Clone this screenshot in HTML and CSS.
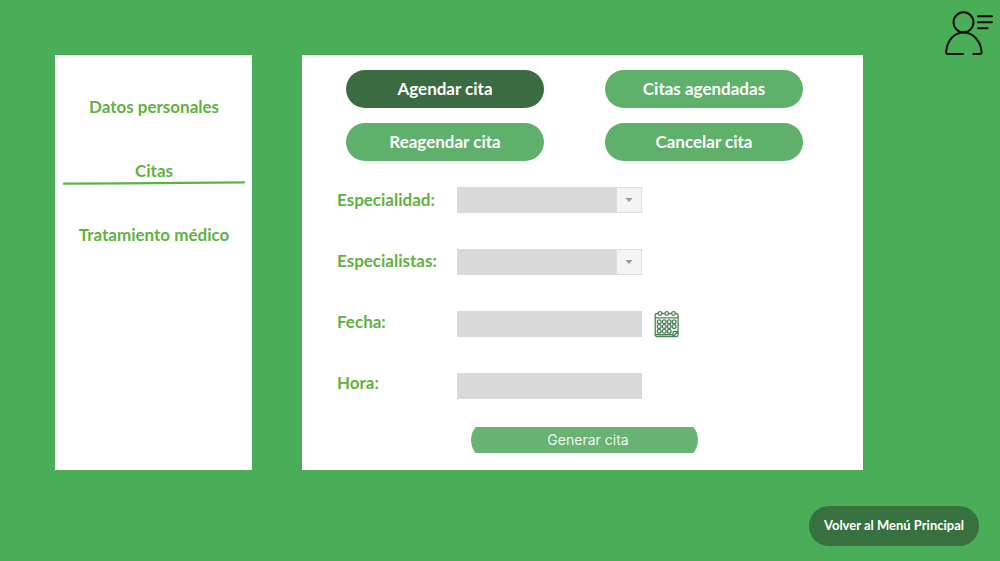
FILE: index.html
```html
<!DOCTYPE html>
<html lang="es">
<head>
<meta charset="utf-8">
<meta name="viewport" content="width=device-width, initial-scale=1">
<title>Agendar cita</title>
<link rel="stylesheet" href="styles.css">
</head>
<body>
<div class="page">
  <nav class="sidebar" aria-label="Secciones">
    <a class="nav-link" href="#datos">Datos personales</a>
    <a class="nav-link nav-link-active" href="#citas" aria-current="page">Citas
      <svg class="nav-underline" viewBox="0 0 182 4" preserveAspectRatio="none" aria-hidden="true"><path d="M1 2.700 L60 2.400 L120 1.800 L181 1.400" fill="none" stroke="#5fb143" stroke-width="2.300" stroke-linecap="round"/></svg>
    </a>
    <a class="nav-link" href="#tratamiento">Tratamiento médico</a>
  </nav>

  <main class="panel">
    <div class="actions">
      <button type="button" class="pill pill-active">Agendar cita</button>
      <button type="button" class="pill">Citas agendadas</button>
      <button type="button" class="pill">Reagendar cita</button>
      <button type="button" class="pill">Cancelar cita</button>
    </div>
    <form class="form">
      <div class="form-body">
        <div class="labels">
          <label for="especialidad">Especialidad:</label>
          <label for="especialistas">Especialistas:</label>
          <label for="fecha">Fecha:</label>
          <label for="hora">Hora:</label>
        </div>
        <div class="fields">
          <div class="select">
            <select class="field" id="especialidad"><option></option></select>
            <span class="select-arrow"><svg width="8" height="4" viewBox="0 0 8 4" aria-hidden="true"><path d="M0.500 0H7.500L4 4Z" fill="#999"/></svg></span>
          </div>
          <div class="select">
            <select class="field" id="especialistas"><option></option></select>
            <span class="select-arrow"><svg width="8" height="4" viewBox="0 0 8 4" aria-hidden="true"><path d="M0.500 0H7.500L4 4Z" fill="#999"/></svg></span>
          </div>
          <div class="date">
            <input class="field" id="fecha" type="text">
            <button type="button" class="calendar" aria-label="Abrir calendario">
              <svg width="26" height="28" viewBox="0 0 26 28" fill="none" stroke="#4b8257" stroke-width="1.3" aria-hidden="true">
                <path d="M4 3.500H3A1.800 1.800 0 0 0 1.200 5.300V24.700A1.800 1.800 0 0 0 3 26.500H22.300A1.800 1.800 0 0 0 24.100 24.700V5.300A1.800 1.800 0 0 0 22.300 3.500H21.500M8 3.500H11M15 3.500H18M1.200 7.800H24.100M1.200 24.600H19.500M19 26.300V22.800A1.300 1.300 0 0 1 20.300 21.500H24M19.500 26L24 21.500"/>
                <circle cx="6" cy="3.500" r="1.800"/><circle cx="12.700" cy="3.500" r="1.800"/><circle cx="19.500" cy="3.500" r="1.800"/>
                <circle cx="5.200" cy="11.800" r="1.900"/><circle cx="10.200" cy="11.800" r="1.900"/><circle cx="15.200" cy="11.800" r="1.900"/><circle cx="20.200" cy="11.800" r="1.900"/>
                <circle cx="5.200" cy="16.500" r="1.900"/><circle cx="10.200" cy="16.500" r="1.900"/><circle cx="15.200" cy="16.500" r="1.900"/><circle cx="20.200" cy="16.500" r="1.900"/>
                <circle cx="5.200" cy="21.200" r="1.900"/><circle cx="10.200" cy="21.200" r="1.900"/><circle cx="15.200" cy="21.200" r="1.900"/>
              </svg>
            </button>
          </div>
          <input class="field" id="hora" type="text">
        </div>
      </div>
      <button type="button" class="submit">Generar cita</button>
    </form>
  </main>

  <div class="profile">
    <button type="button" class="profile-button" aria-label="Perfil">
      <svg width="50" height="46" viewBox="0 0 50 46" fill="none" stroke="#0b0f0c" stroke-width="2" stroke-linecap="round" stroke-linejoin="round" aria-hidden="true">
        <circle cx="18.500" cy="12.300" r="10"/>
        <path d="M18 44H3C1.500 44 1 43.200 1.200 41.600C2 31 9 22.400 18.500 22.400S35.500 31 36.600 41.600C36.800 43.200 36 44 34.500 44H28.500M33 6.200H47M33 12.200H47M33 18.300H42.500"/>
      </svg>
    </button>
  </div>

  <footer class="footer">
    <button type="button" class="back">Volver al Menú Principal</button>
  </footer>
</div>
</body>
</html>
```
FILE: styles.css
```css
* {
  box-sizing: border-box;
}

body {
  margin: 0;
  background: #4aad58;
  font-family: Lato, "Liberation Sans", sans-serif;
  font-size: 17px;
  font-weight: 700;
}

button {
  border: 0;
  padding: 0;
  font: inherit;
  cursor: pointer;
}

.page {
  display: grid;
  grid-template-columns: 197fr 50px 561fr 137px;
  grid-template-rows: auto auto;
  padding-left: 55px;
}

.sidebar {
  display: flex;
  flex-direction: column;
  align-items: stretch;
  gap: 40px;
  margin-top: 55px;
  padding: 40px 7px 40px 8px;
  background: #fff;
}

.nav-link {
  position: relative;
  color: #5fb143;
  line-height: 24px;
  text-align: center;
  text-decoration: none;
  white-space: nowrap;
}

.nav-underline {
  position: absolute;
  left: 0;
  bottom: -2px;
  width: 100%;
  height: 4px;
}

.panel {
  grid-column: 3;
  margin-top: 55px;
  padding: 15px 60px 10px 35px;
  background: #fff;
}

.actions {
  display: grid;
  grid-template-columns: 1fr 1fr;
  gap: 15px 61px;
  padding-left: 9px;
}

.pill {
  height: 38px;
  padding-bottom: 2px;
  border-radius: 20px;
  background: #5fb06b;
  color: #fff;
}

.pill-active {
  background: #3b6b40;
}

.form {
  margin-top: 26px;
}

.form-body {
  display: flex;
  align-items: flex-start;
}

.labels {
  display: flex;
  flex-direction: column;
  gap: 37px;
  width: 120px;
  padding-top: 1px;
  color: #5fb143;
  line-height: 24px;
}

.fields {
  display: flex;
  flex-direction: column;
  align-items: flex-start;
  gap: 36px;
}

.field {
  display: block;
  width: 185px;
  height: 26px;
  margin: 0;
  padding: 0 8px;
  border: 0;
  border-radius: 0;
  background: #d9d9d9;
  color: #333;
  font: inherit;
  appearance: none;
}

.select {
  position: relative;
}

.select-arrow {
  position: absolute;
  top: 0;
  right: 0;
  display: grid;
  place-items: center;
  width: 26px;
  height: 26px;
  border: 1px solid #dedede;
  background: #f4f4f4;
  pointer-events: none;
}

.date {
  display: flex;
  align-items: center;
  gap: 12px;
  height: 26px;
}

.calendar {
  display: flex;
  background: none;
}

.submit {
  display: block;
  width: 227px;
  height: 40px;
  margin: 21px 0 0 134px;
  padding: 0 0 2px 7px;
  border-radius: 20px;
  background: #68b273;
  color: #eef8ef;
  font-family: Inter, "Liberation Sans", sans-serif;
  font-size: 14px;
  font-weight: 400;
  clip-path: inset(7px 0);
}

.profile {
  display: flex;
  align-items: flex-start;
  justify-content: flex-end;
  padding: 10px 5px 0 0;
}

.profile-button {
  display: flex;
  background: none;
}

.footer {
  grid-column: 1 / -1;
  display: flex;
  justify-content: flex-end;
  padding: 36px 21px 15px 0;
}

.back {
  height: 40px;
  padding: 0 15px 2px;
  border-radius: 20px;
  background: #36713f;
  color: #fff;
  font-size: 13px;
}
```
